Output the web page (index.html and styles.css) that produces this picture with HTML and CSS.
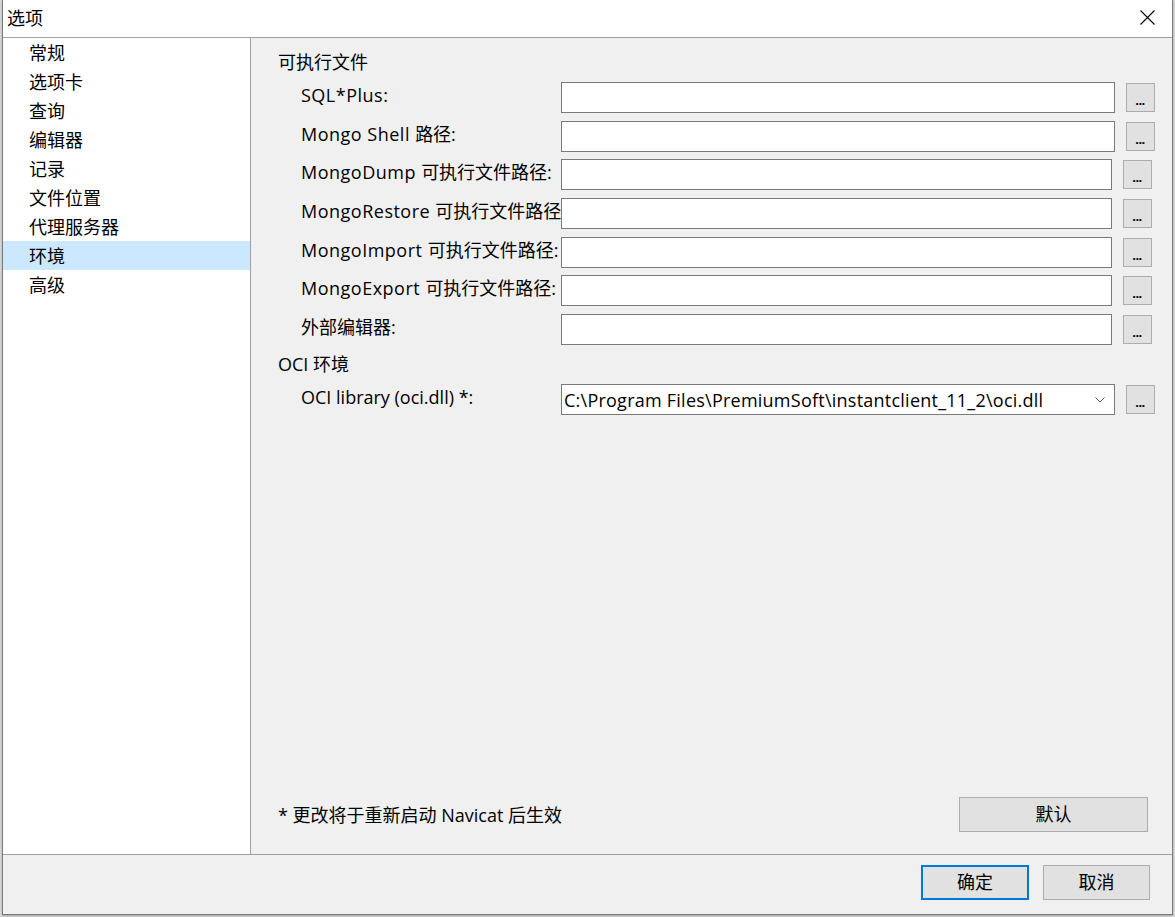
FILE: index.html
```html
<!DOCTYPE html>
<html lang="zh-CN">
<head>
<meta charset="utf-8">
<title>选项</title>
<link rel="stylesheet" href="styles.css">
</head>
<body>
<div class="window">
  <div class="titlebar">
    <span class="title">选项</span>
    <svg class="close" width="15" height="15" viewBox="0 0 15 15"><path d="M0.5 0.5 L14.5 14.5 M14.5 0.5 L0.5 14.5" stroke="#000" stroke-width="1.1" fill="none"/></svg>
  </div>
  <div class="content">
    <ul class="sidebar">
      <li class="nav">常规</li>
      <li class="nav">选项卡</li>
      <li class="nav">查询</li>
      <li class="nav">编辑器</li>
      <li class="nav">记录</li>
      <li class="nav">文件位置</li>
      <li class="nav">代理服务器</li>
      <li class="nav selected">环境</li>
      <li class="nav">高级</li>
    </ul>
    <div class="main">
      <div class="section-title">可执行文件</div>
      <div class="rows">
        <div class="row"><span class="label"><span class="lat">SQL*Plus:</span></span><div class="field"></div><div class="browse">...</div></div>
        <div class="row"><span class="label"><span class="lat">Mongo Shell </span>路径:</span><div class="field"></div><div class="browse">...</div></div>
        <div class="row narrow"><span class="label"><span class="lat">MongoDump </span>可执行文件路径:</span><div class="field"></div><div class="browse">...</div></div>
        <div class="row narrow"><span class="label"><span class="lat">MongoRestore </span>可执行文件路径:</span><div class="field"></div><div class="browse">...</div></div>
        <div class="row narrow"><span class="label"><span class="lat">MongoImport </span>可执行文件路径:</span><div class="field"></div><div class="browse">...</div></div>
        <div class="row narrow"><span class="label"><span class="lat">MongoExport </span>可执行文件路径:</span><div class="field"></div><div class="browse">...</div></div>
        <div class="row narrow"><span class="label">外部编辑器:</span><div class="field"></div><div class="browse">...</div></div>
      </div>
      <div class="section-title second">OCI 环境</div>
      <div class="rows">
        <div class="row"><span class="label">OCI library (oci.dll) *:</span>
          <div class="field combo"><span class="combo-text">C:\Program Files\PremiumSoft\instantclient_11_2\oci.dll</span>
            <svg class="chevron" width="10" height="6" viewBox="0 0 10 6"><path d="M0.5 0.5 L5 5 L9.5 0.5" stroke="#555" stroke-width="1" fill="none"/></svg>
          </div>
          <div class="browse">...</div></div>
      </div>
      <div class="spacer"></div>
      <div class="bottom-row">
        <span class="note">* 更改将于重新启动 Navicat 后生效</span>
        <div class="btn default-btn">默认</div>
      </div>
    </div>
  </div>
  <div class="footer">
    <div class="btn ok">确定</div>
    <div class="btn cancel">取消</div>
  </div>
</div>
</body>
</html>
```

FILE: styles.css
```css
* { box-sizing: border-box; }
html, body { margin: 0; padding: 0; }
body {
  background: #d9d9d9;
  width: 1175px;
  height: 917px;
  overflow: hidden;
  font-family: "Open Sans", "Noto Sans CJK SC", sans-serif;
  font-size: 18px;
  color: #000;
}
.window {
  margin-left: 2px;
  width: 1171px;
  height: 915px;
  border: 1px solid #7a7a7a;
  border-top: none;
  background: #f0f0f0;
  display: flex;
  flex-direction: column;
  box-shadow: 0 1px 2px rgba(0,0,0,0.25);
}
.titlebar {
  height: 38px;
  flex: none;
  background: #fff;
  border-bottom: 1px solid #a0a0a0;
  display: flex;
  align-items: center;
  justify-content: space-between;
  padding: 0 17px 1px 4px;
}
.title { line-height: 24px; }
.close { display: block; margin-top: -1px; }
.content {
  flex: 1;
  display: flex;
  min-height: 0;
}
.sidebar {
  list-style: none;
  margin: 0;
  padding: 0;
  width: 248px;
  flex: none;
  background: #fff;
  border-right: 1px solid #a0a0a0;
}
.nav {
  height: 29px;
  line-height: 28px;
  padding-left: 26px;
  padding-top: 1px;
}
.nav.selected { background: #cce8ff; }
.main {
  flex: 1;
  display: flex;
  flex-direction: column;
  padding: 12px 0 22px 27px;
}
.section-title {
  height: 24px;
  line-height: 24px;
  margin-bottom: 8px;
}
.section-title.second { margin-top: 7px; }
.rows {
  display: flex;
  flex-direction: column;
  gap: 7.67px;
}
.row {
  display: flex;
  align-items: center;
  height: 31px;
  padding-left: 23px;
}
.label {
  width: 260px;
  flex: none;
  white-space: nowrap;
  overflow: hidden;
  line-height: 24px;
  padding-bottom: 5px;
}
.lat { letter-spacing: 0.5px; }
.field {
  width: 554px;
  height: 31px;
  flex: none;
  background: #fff;
  border: 1px solid #7a7a7a;
}
.row.narrow .field { width: 551px; }
.browse {
  width: 29px;
  height: 29px;
  flex: none;
  margin-left: 11px;
  background: #e1e1e1;
  border: 1px solid #adadad;
  font-size: 13px;
  font-weight: bold;
  letter-spacing: -0.5px;
  text-align: center;
  line-height: 32px;
  padding-right: 1px;
}
.combo {
  display: flex;
  align-items: center;
  justify-content: space-between;
  padding: 0 9px 0 2px;
}
.combo-text { line-height: 24px; padding-top: 1px; white-space: nowrap; letter-spacing: 0.24px; }
.chevron { display: block; margin-top: 2px; }
.spacer { flex: 1; }
.bottom-row {
  display: flex;
  align-items: center;
  justify-content: space-between;
  padding-right: 24px;
}
.note { line-height: 24px; margin-top: 1px; }
.btn {
  background: #e1e1e1;
  border: 1px solid #adadad;
  text-align: center;
}
.default-btn {
  width: 189px;
  height: 35px;
  line-height: 32px;
}
.footer {
  height: 60px;
  flex: none;
  border-top: 1px solid #a0a0a0;
  display: flex;
  justify-content: flex-end;
  align-items: flex-start;
  gap: 14px;
  padding: 10px 22px 0 0;
}
.ok, .cancel {
  width: 108px;
  height: 35px;
  line-height: 32px;
}
.ok { border: 2px solid #0078d7; line-height: 30px; }
.cancel { width: 107px; }
```
